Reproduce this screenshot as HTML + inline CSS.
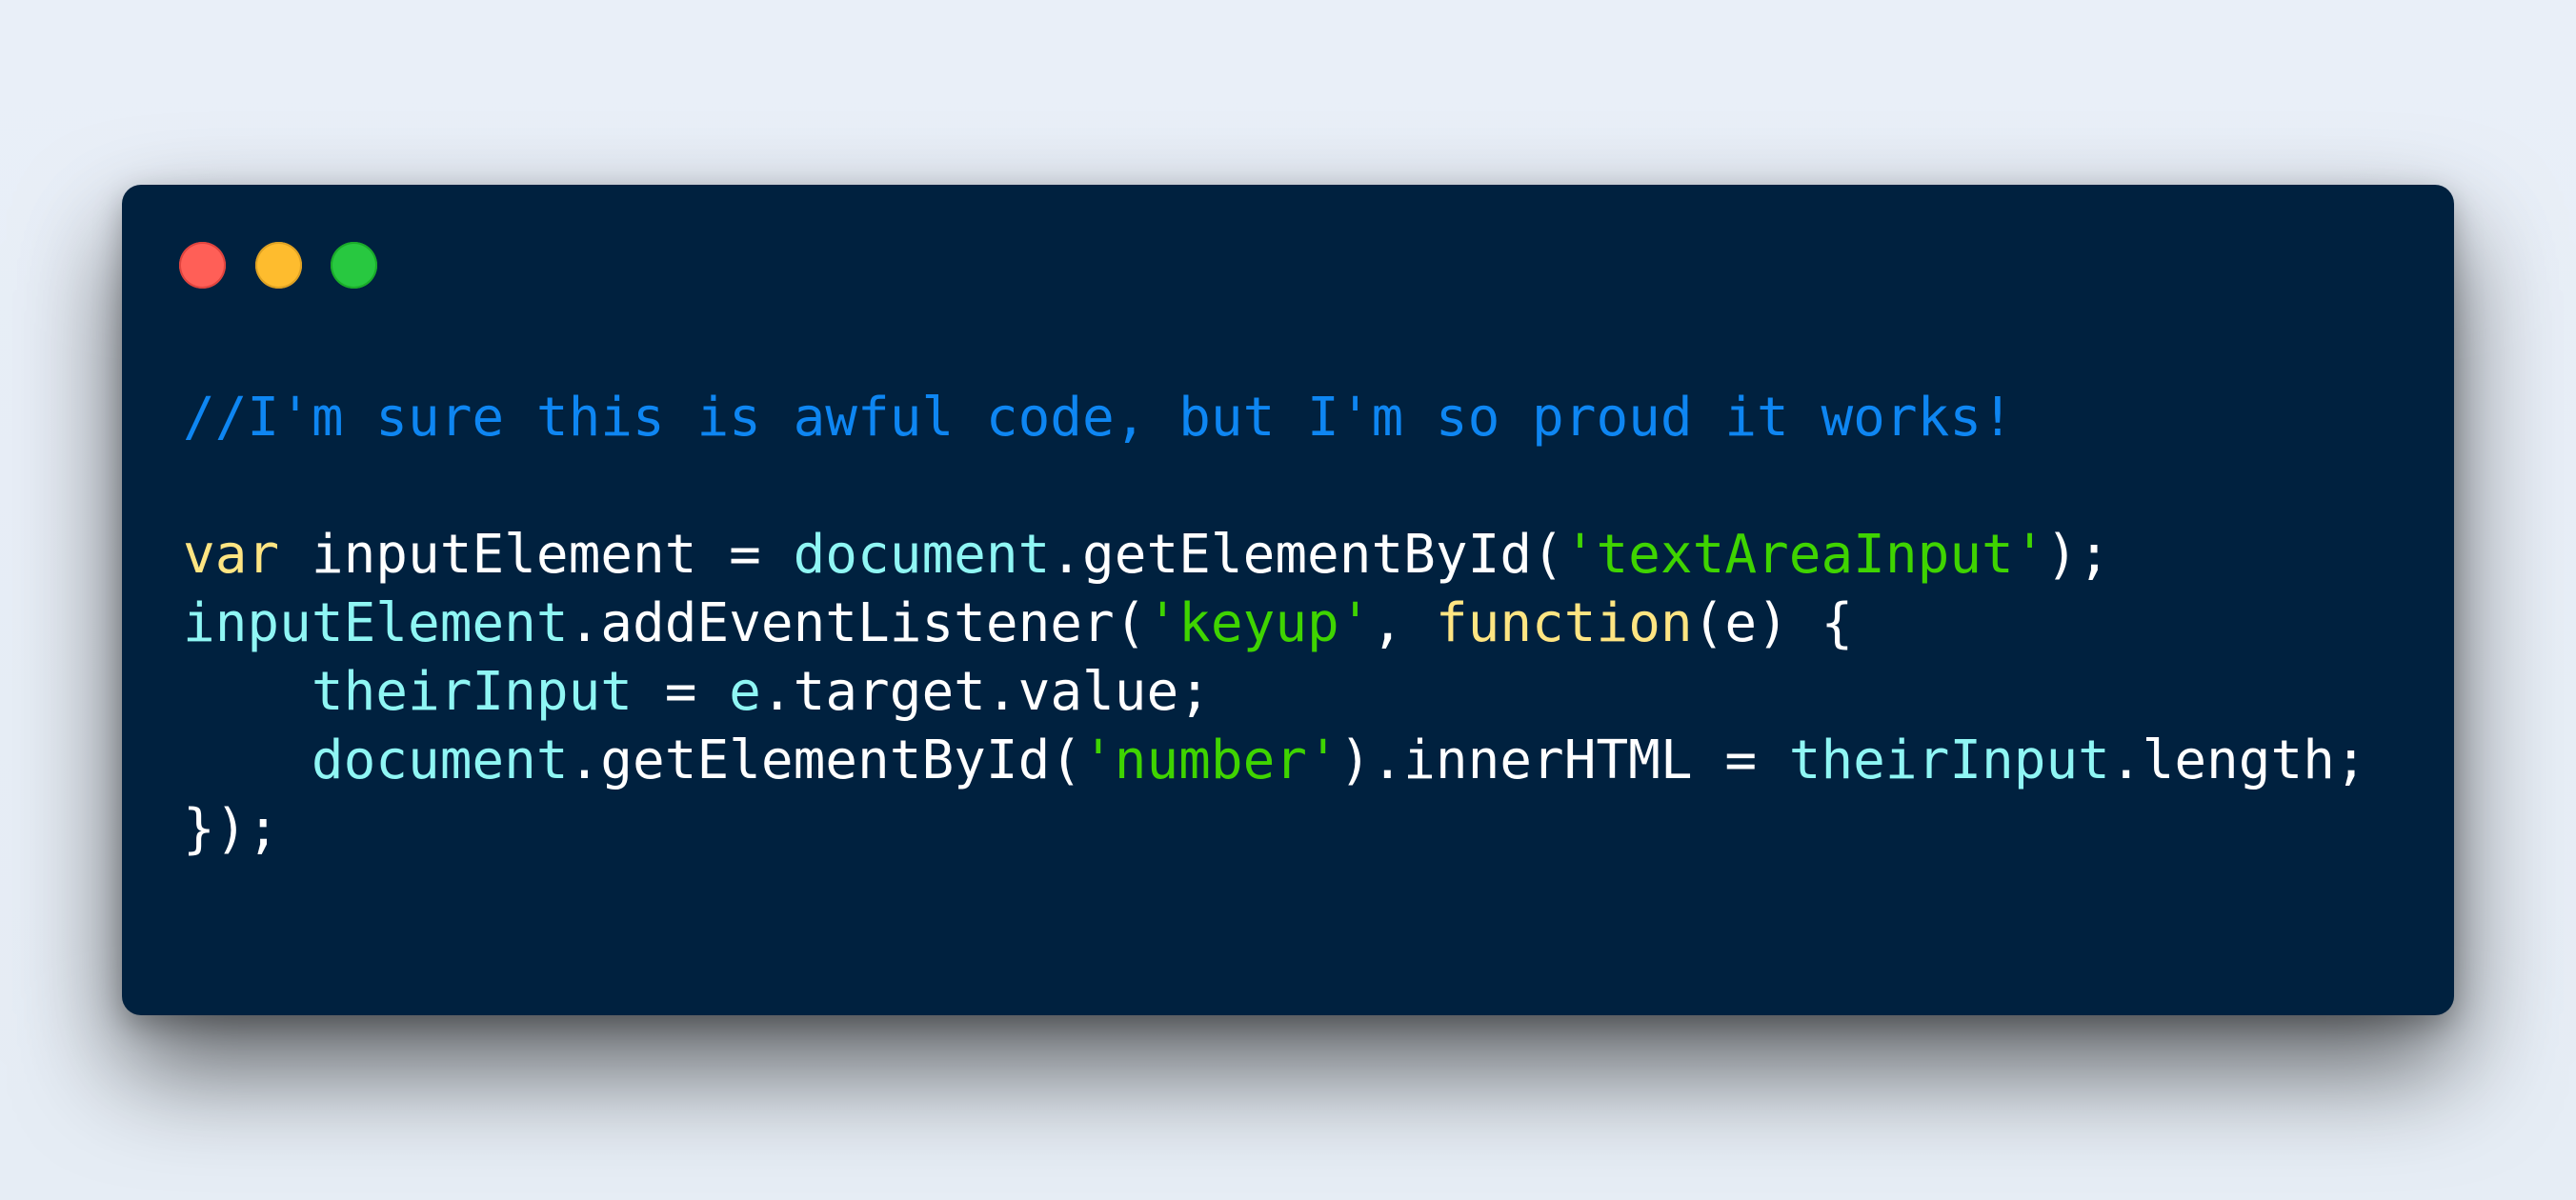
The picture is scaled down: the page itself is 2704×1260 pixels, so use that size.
<!DOCTYPE html>
<html><head><meta charset="utf-8"><style>
html,body{margin:0;padding:0;}
body{width:2704px;height:1260px;overflow:hidden;position:relative;
background:linear-gradient(180deg,#e9eff8 0%,#e6edf5 100%);}
.win{position:absolute;left:128px;top:194px;width:2448px;height:872px;background:#00213f;border-radius:20px;
box-shadow:0 55px 110px rgba(0,0,0,0.6),0 10px 30px rgba(0,0,0,0.25);}
.dot{position:absolute;width:49px;height:49px;border-radius:50%;top:254px;}
pre{position:absolute;left:192px;top:403px;margin:0;font-family:"DejaVu Sans Mono","Liberation Mono",monospace;
font-size:56px;line-height:72px;color:#ffffff;}
.c{color:#0e86f2}.k{color:#ffe582}.cy{color:#8ff6f4}.s{color:#3fd400}
</style></head><body>
<div class="win"></div>
<div class="dot" style="left:188px;background:#ff5f57;box-shadow:inset 0 0 0 2px #e0443e"></div>
<div class="dot" style="left:268px;background:#febc2e;box-shadow:inset 0 0 0 2px #dea123"></div>
<div class="dot" style="left:347px;background:#28c840;box-shadow:inset 0 0 0 2px #1aab29"></div>
<pre><span class="c">//I'm sure this is awful code, but I'm so proud it works!</span>

<span class="k">var</span> inputElement = <span class="cy">document</span>.getElementById(<span class="s">'textAreaInput'</span>);
<span class="cy">inputElement</span>.addEventListener(<span class="s">'keyup'</span>, <span class="k">function</span>(e) {
    <span class="cy">theirInput</span> = <span class="cy">e</span>.target.value;
    <span class="cy">document</span>.getElementById(<span class="s">'number'</span>).innerHTML = <span class="cy">theirInput</span>.length;
});</pre>
</body></html>
